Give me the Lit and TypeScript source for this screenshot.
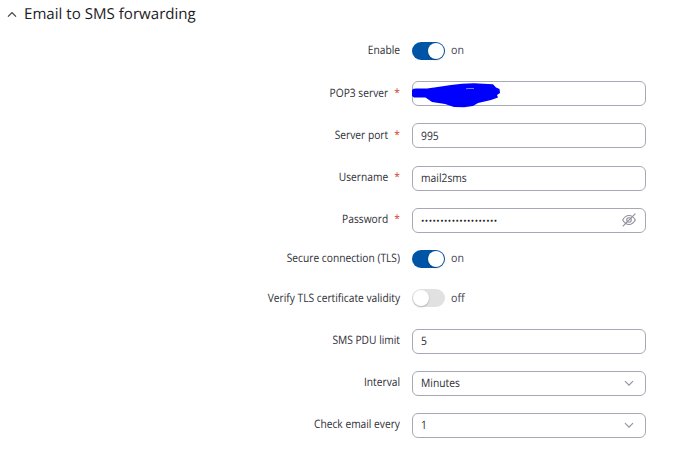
import { LitElement, html, css, svg, nothing } from "lit";
import { customElement } from "lit/decorators.js";
import { classMap } from "lit/directives/class-map.js";

type Kind = "toggle" | "text" | "password" | "select";
interface Field {
  label: string;
  kind: Kind;
  value?: string;
  required?: boolean;
  on?: boolean;
  redacted?: boolean;
}

const FIELDS: Field[] = [
  { label: "Enable", kind: "toggle", on: true },
  { label: "POP3 server", kind: "text", required: true, redacted: true },
  { label: "Server port", kind: "text", value: "995", required: true },
  { label: "Username", kind: "text", value: "mail2sms", required: true },
  { label: "Password", kind: "password", value: "••••••••••••••••••••", required: true },
  { label: "Secure connection (TLS)", kind: "toggle", on: true },
  { label: "Verify TLS certificate validity", kind: "toggle", on: false },
  { label: "SMS PDU limit", kind: "text", value: "5" },
  { label: "Interval", kind: "select", value: "Minutes" },
  { label: "Check email every", kind: "select", value: "1" },
];

const chevron = svg`<path d="M1 1.2 L5 5.2 L9 1.2" fill="none" stroke="#9293a0" stroke-width="1.15"/>`;

@customElement("app-root")
export class AppRoot extends LitElement {
  static styles = css`
    :host {
      display: block;
      box-sizing: border-box;
      width: 690px;
      height: 459px;
      overflow: hidden;
      background: #fff;
      color: #2e2e36;
      font-family: "Open Sans", "Noto Sans", sans-serif;
      font-size: 11.6px;
      line-height: 16px;
      text-rendering: geometricPrecision;
    }
    header {
      display: flex;
      align-items: center;
      height: 28px;
      padding: 0 0 5.2px 7px;
    }
    h1 {
      margin: 0 0 0 7px;
      font-size: 15.1px;
      line-height: 20px;
      font-weight: 400;
      color: #1c1c1f;
    }
    svg { display: block; }
    .row {
      display: grid;
      grid-template-columns: 400px 234px;
      column-gap: 12px;
      align-items: center;
      box-sizing: border-box;
      height: 42.2px;
    }
    .row.toggle {
      height: 39.35px;
      padding-bottom: 4px;
    }
    .label {
      text-align: right;
      white-space: nowrap;
      transform: scaleX(0.882);
      transform-origin: right center;
    }
    .toggle .label { padding-top: 1px; }
    .star { color: #d8391f; margin-left: 7px; }
    .box {
      position: relative;
      display: flex;
      align-items: center;
      justify-content: space-between;
      box-sizing: border-box;
      height: 25px;
      padding: 0 9px 0 8px;
      border: 1px solid #a7a8b3;
      border-radius: 6px;
    }
    .box.select { padding-right: 11.5px; }
    .value {
      padding-top: 1.5px;
      transform: scaleX(0.89);
      transform-origin: left center;
    }
    .value.dots { padding-top: 1px; font-size: 9px; letter-spacing: 0.45px; color: #222; transform: none; }
    .scribble { position: absolute; left: -2px; top: -1px; }
    .switch-wrap { display: flex; align-items: center; gap: 6px; }
    .switch {
      display: flex;
      align-items: center;
      box-sizing: border-box;
      width: 33px;
      height: 18px;
      padding: 0 1px;
      border-radius: 9px;
      background: #e1e1e2;
    }
    .switch.on { background: #0054a6; justify-content: flex-end; }
    .knob {
      width: 16px;
      height: 16px;
      border-radius: 50%;
      background: #fff;
      box-shadow: 0 1px 2px rgba(0, 0, 0, 0.22);
    }
    .state { padding-top: 1px; color: #44454f; transform: scaleX(0.92); transform-origin: left center; }
  `;

  private control(f: Field) {
    if (f.kind === "toggle") {
      return html`<div class="switch-wrap">
        <div class=${classMap({ switch: true, on: !!f.on })}><div class="knob"></div></div>
        <span class="state">${f.on ? "on" : "off"}</span>
      </div>`;
    }
    return html`<div class=${classMap({ box: true, select: f.kind === "select" })}>
      <span class=${classMap({ value: true, dots: f.kind === "password" })}>${f.value ?? ""}</span>
      ${f.redacted
        ? html`<svg class="scribble" width="92" height="27" viewBox="0 0 92 27">
            <path fill="#0000ff" d="M1 9 Q2 7.5 6 7.6 L16 7.6 L25 6.3 L40 4 L51 2.8 L63 2.3 L82 3.2 L85 6.5 L88.5 8 L89 12 L86 14 L87 16.5 L80 19 L67 22 L62 25 L53 26.3 L43 26 L34 23 L21 21 L14.5 16.5 L3 16.5 L1 15 Z"/>
            <path d="M55 7.8 L57 7.5 H63" fill="none" stroke="#9a9aff" stroke-width=".8"/>
          </svg>`
        : nothing}
      ${f.kind === "select" ? html`<svg width="10" height="7" viewBox="0 0 10 7">${chevron}</svg>` : nothing}
      ${f.kind === "password"
        ? html`<svg width="14" height="14" viewBox="0 0 13 13" fill="none" stroke="#8d8e9a">
            <path d="M.6 6.5 Q3 2.4 6.5 2.4 T12.4 6.5 Q10 10.6 6.5 10.6 T.6 6.5 Z"/>
            <circle cx="6.5" cy="6.5" r="2.1"/>
            <path d="M.7 12.5 L12.4 .5"/>
          </svg>`
        : nothing}
    </div>`;
  }

  render() {
    return html`
      <header>
        <svg width="10" height="7" viewBox="0 0 10 7"><path d="M1 5.6 L5 1.6 L9 5.6" fill="none" stroke="#3b3b40" stroke-width="1.15"/></svg>
        <h1>Email to SMS forwarding</h1>
      </header>
      ${FIELDS.map(
        (f) => html`<div class=${classMap({ row: true, toggle: f.kind === "toggle" })}>
          <div class="label">${f.label}${f.required ? html`<span class="star">*</span>` : nothing}</div>
          ${this.control(f)}
        </div>`
      )}
    `;
  }
}
